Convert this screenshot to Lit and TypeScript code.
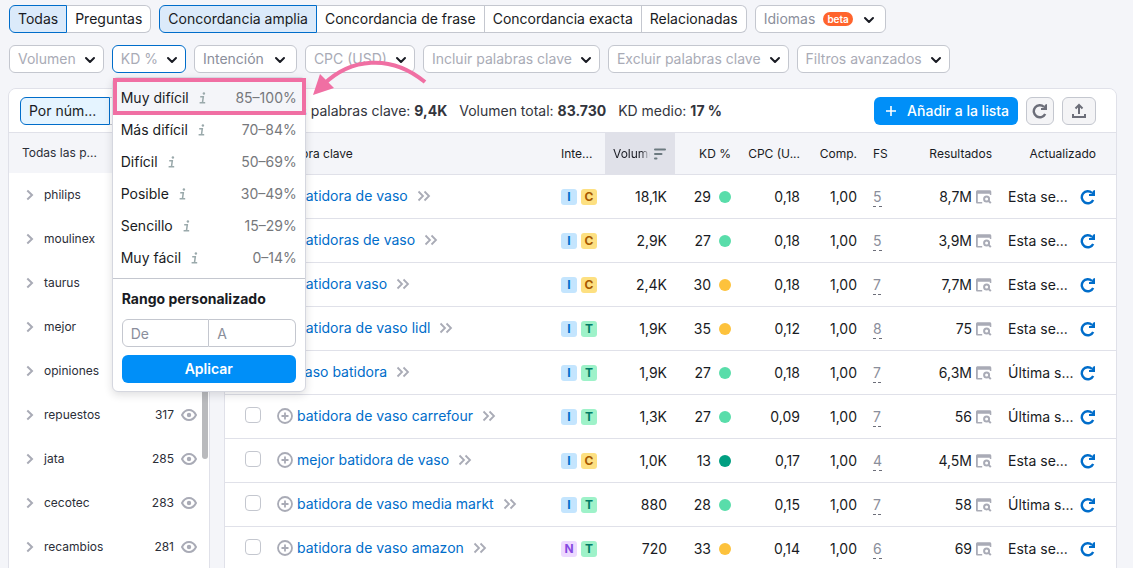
import { LitElement, html, css, svg, nothing } from "lit";
import { customElement, property } from "lit/decorators.js";
import { classMap } from "lit/directives/class-map.js";

const chevron = html`<svg class="chev" width="16" height="16" viewBox="0 0 16 16" fill="none" stroke="#191b23" stroke-width="2" stroke-linecap="round" stroke-linejoin="round" aria-hidden="true"><path d="M4 7l4 4 4-4" /></svg>`;

const info = html`<svg width="8" height="12" viewBox="0 0 8 12" fill="none" stroke="#9aa9ab" stroke-width="1.5" aria-hidden="true"><path d="M1.200 4.700H4.300L3.500 10.700M0.600 10.800H6.200" /><circle cx="4.900" cy="1.500" r="1.200" fill="#9aa9ab" stroke="none" /></svg>`;

const reloadPath = svg`<path d="M13.200 10.900A6 6 0 1 1 12 4" fill="none" stroke="currentColor" stroke-width="2.400" /><path d="M15 1V7H9V5H11.500L13 1.800Z" fill="currentColor" />`;

const reload = html`<svg width="16" height="16" viewBox="0 0 16 16" aria-hidden="true">${reloadPath}</svg>`;

const serp = html`<svg width="16" height="14" viewBox="0 0 16 14" aria-hidden="true"><path d="M0 2C0 .9.7.3 1.800.3H13.600C14.700.3 15.300.9 15.300 2V5H13.800V3.700H1.800V12H6.200V13.500H1.500C.6 13.500 0 12.900 0 11.900Z" fill="#a9abb6" /><circle cx="10.600" cy="8.900" r="2.500" fill="none" stroke="#a9abb6" stroke-width="2" /><path d="M12.500 10.800L14.800 13.100" stroke="#a9abb6" stroke-width="2" /></svg>`;

const eye = html`<svg width="16" height="12" viewBox="0 0 16 12" aria-hidden="true"><path d="M1 6C2.600 2.900 5 1 8 1s5.400 1.900 7 5c-1.600 3.100-4 5-7 5S2.600 9.100 1 6Z" fill="none" stroke="#a9abb6" stroke-width="2" stroke-linejoin="round" /><circle cx="8" cy="6" r="2.200" fill="#a9abb6" /></svg>`;

const caret = html`<svg width="8" height="12" viewBox="0 0 8 12" fill="none" stroke="#a9abb6" stroke-width="2" aria-hidden="true"><path d="M1.300 1.500L6 6 1.300 10.500" /></svg>`;

const plusCircle = html`<svg width="16" height="16" viewBox="0 0 16 16" fill="none" stroke="#a9abb6" stroke-width="1.800" aria-hidden="true"><circle cx="8" cy="8" r="7" /><path d="M8 4.500v7M4.500 8h7" /></svg>`;

const doubleCaret = html`<svg width="14" height="12" viewBox="0 0 14 12" fill="none" stroke="#a9abb6" stroke-width="1.800" aria-hidden="true"><path d="M1.500 1.500L6 6 1.500 10.500M7.500 1.500L12 6 7.500 10.500" /></svg>`;

type Row = [string, string, string, number, string, string, string, number, string, string];

const ROWS: Row[] = [
  ["batidora de vaso", "IC", "18,1K", 29, "green", "0,18", "1,00", 5, "8,7M", "Esta se..."],
  ["batidoras de vaso", "IC", "2,9K", 27, "green", "0,18", "1,00", 5, "3,9M", "Esta se..."],
  ["batidora vaso", "IC", "2,4K", 30, "yellow", "0,18", "1,00", 7, "7,7M", "Esta se..."],
  ["batidora de vaso lidl", "IT", "1,9K", 35, "yellow", "0,12", "1,00", 8, "75", "Esta se..."],
  ["vaso batidora", "IT", "1,9K", 27, "green", "0,18", "1,00", 7, "6,3M", "Última s..."],
  ["batidora de vaso carrefour", "IT", "1,3K", 27, "green", "0,09", "1,00", 7, "56", "Última s..."],
  ["mejor batidora de vaso", "IC", "1,0K", 13, "dark", "0,17", "1,00", 4, "4,5M", "Esta se..."],
  ["batidora de vaso media markt", "IT", "880", 28, "green", "0,15", "1,00", 7, "58", "Última s..."],
  ["batidora de vaso amazon", "NT", "720", 33, "yellow", "0,14", "1,00", 6, "69", "Esta se..."],
];

const GROUPS: [string, string][] = [
  ["philips", ""],
  ["moulinex", ""],
  ["taurus", ""],
  ["mejor", ""],
  ["opiniones", ""],
  ["repuestos", "317"],
  ["jata", "285"],
  ["cecotec", "283"],
  ["recambios", "281"],
];

const LEVELS: [string, string][] = [
  ["Muy difícil", "85–100%"],
  ["Más difícil", "70–84%"],
  ["Difícil", "50–69%"],
  ["Posible", "30–49%"],
  ["Sencillo", "15–29%"],
  ["Muy fácil", "0–14%"],
];

const base = css`
  * {
    box-sizing: border-box;
  }
  button,
  input {
    font: inherit;
    color: inherit;
    margin: 0;
  }
  button {
    cursor: pointer;
    white-space: nowrap;
  }
  svg {
    display: block;
    flex: none;
  }
`;

@customElement("pill-group")
class PillGroup extends LitElement {
  @property({ attribute: false }) items: string[] = [];
  static styles = [
    base,
    css`
      :host {
        display: flex;
      }
      .pill {
        height: 28px;
        padding: 0 8px;
        border: 1px solid #c4c7cf;
        border-left-width: 0;
        background: #fff;
        color: #191b23;
      }
      .pill:first-child {
        border-left-width: 1px;
        border-radius: 6px 0 0 6px;
      }
      .pill:last-child {
        border-radius: 0 6px 6px 0;
      }
      .pill.on {
        background: #dbeafa;
        border-color: #006dca;
      }
    `,
  ];
  render() {
    return this.items.map(
      (t, i) => html`<button class=${classMap({ pill: true, on: i === 0 })} aria-pressed=${i === 0}>${t}</button>`
    );
  }
}

@customElement("filter-button")
class FilterButton extends LitElement {
  @property() label = "";
  @property() badge = "";
  @property({ type: Boolean }) strong = false;
  @property({ type: Boolean }) open = false;
  static styles = [
    base,
    css`
      :host {
        display: block;
      }
      .filter {
        display: flex;
        align-items: center;
        gap: 6px;
        height: 28px;
        padding: 0 5px 0 8px;
        border: 1px solid #c4c7cf;
        border-radius: 6px;
        background: #fff;
        color: #a9abb6;
      }
      .strong {
        gap: 8px;
        padding-right: 8px;
        color: #8a8e9b;
      }
      .open {
        border-color: #006dca;
      }
      .badge {
        padding: 0 4px;
        border-radius: 7px;
        background: #ff642d;
        color: #fff;
        font-size: 10px;
        line-height: 14px;
        font-weight: 600;
      }
    `,
  ];
  render() {
    return html`<button
      class=${classMap({ filter: true, strong: this.strong, open: this.open })}
      aria-expanded=${this.open}
    >
      <span>${this.label}</span>
      ${this.badge ? html`<span class="badge">${this.badge}</span>` : nothing} ${chevron}
    </button>`;
  }
}

@customElement("kd-menu")
class KdMenu extends LitElement {
  static styles = [
    base,
    css`
      :host {
        display: block;
        padding: 4px 0 8px;
        background: #fff;
        border: 1px solid #d5d7df;
        border-radius: 6px;
        box-shadow: 0 3px 8px rgba(25, 27, 35, 0.14);
        color: #191b23;
      }
      .item {
        display: flex;
        align-items: center;
        gap: 10px;
        width: 100%;
        height: 32px;
        padding: 0 8px;
        border: 0;
        background: none;
      }
      .item:first-child {
        background: #f4f5f9;
      }
      .range {
        margin-left: auto;
        color: #76787c;
      }
      .custom {
        margin-top: 4px;
        padding: 10px 9px 0;
        border-top: 1px solid #c4c7cf;
      }
      .title {
        margin: 0;
        font-size: 14px;
        line-height: 20px;
        font-weight: 700;
      }
      .inputs {
        display: flex;
        margin: 10px 0 8px;
      }
      .inputs input {
        flex: 1;
        min-width: 0;
        height: 28px;
        padding: 0 8px;
        border: 1px solid #c4c7cf;
        background: #fff;
        outline: none;
      }
      .inputs input:first-child {
        border-radius: 6px 0 0 6px;
      }
      .inputs input:last-child {
        border-left: 0;
        border-radius: 0 6px 6px 0;
      }
      .inputs input::placeholder {
        color: #8a8e9b;
        opacity: 1;
      }
      .apply {
        width: 100%;
        height: 28px;
        border: 0;
        border-radius: 6px;
        background: #008ff8;
        color: #fff;
        font-weight: 600;
      }
    `,
  ];
  render() {
    return html`
      <div class="list">
        ${LEVELS.map(([n, r]) => html`<button class="item"><span>${n}</span>${info}<span class="range">${r}</span></button>`)}
      </div>
      <div class="custom">
        <h2 class="title">Rango personalizado</h2>
        <div class="inputs">
          <input aria-label="De" placeholder="De" />
          <input aria-label="A" placeholder="A" />
        </div>
        <button class="apply">Aplicar</button>
      </div>
    `;
  }
}

@customElement("group-list")
class GroupList extends LitElement {
  static styles = [
    base,
    css`
      :host {
        display: block;
        position: relative;
        background: #fff;
        border-right: 1px solid #e0e1e9;
        font-size: 12px;
        color: #2b2e38;
      }
      .head {
        height: 40px;
        padding: 0 13px;
        background: #f4f5f9;
        line-height: 40px;
      }
      .rows {
        list-style: none;
        margin: 0;
        padding: 0;
      }
      .row {
        display: flex;
        align-items: center;
        width: 100%;
        height: 44px;
        padding: 0 12px 0 17px;
        border: 0;
        background: none;
      }
      .name {
        margin-left: 10px;
      }
      .count {
        margin-left: auto;
        margin-right: 7px;
      }
      .thumb {
        position: absolute;
        top: 42px;
        right: 1px;
        width: 6px;
        height: 284px;
        border-radius: 3px;
        background: #b9babd;
      }
    `,
  ];
  render() {
    return html`
      <div class="head">Todas las p...</div>
      <ul class="rows">
        ${GROUPS.map(
          ([n, c]) =>
            html`<li><button class="row">${caret}<span class="name">${n}</span><span class="count">${c}</span>${eye}</button></li>`
        )}
      </ul>
      <div class="thumb"></div>
    `;
  }
}

@customElement("keyword-table")
class KeywordTable extends LitElement {
  static styles = [
    base,
    css`
      :host {
        display: block;
        border-left: 1px solid #e0e1e9;
        background: #fff;
        color: #191b23;
      }
      table {
        width: 100%;
        table-layout: fixed;
        border-collapse: separate;
        border-spacing: 0;
      }
      th,
      td {
        padding: 0 8px;
        border-bottom: 1px solid #e0e1e9;
        text-align: right;
        white-space: nowrap;
      }
      th {
        height: 42px;
        background: #f4f5f9;
        font-size: 12px;
        font-weight: 400;
        overflow: hidden;
      }
      td {
        height: 44px;
      }
      .c-check {
        width: 44px;
        padding-left: 20px;
      }
      td.c-check {
        padding-bottom: 4px;
      }
      td.c-kw {
        padding-bottom: 2px;
      }
      .c-int {
        width: 52px;
      }
      .c-vol {
        width: 70px;
      }
      .c-kd {
        width: 64px;
      }
      .c-cpc {
        width: 69px;
      }
      .c-comp {
        width: 57px;
      }
      .c-fs {
        width: 35px;
      }
      .c-res {
        width: 100px;
      }
      .c-upd {
        width: 116px;
        padding-right: 20px;
      }
      .left {
        text-align: left;
      }
      th.sorted {
        background: #e0e1e9;
      }
      .sort,
      .kw,
      .intents,
      .kd,
      .res,
      .upd {
        display: flex;
        align-items: center;
      }
      .sort {
        justify-content: space-between;
      }
      .fade {
        width: 37px;
        overflow: hidden;
        mask-image: linear-gradient(90deg, #000 75%, transparent);
      }
      .check {
        display: block;
        appearance: none;
        width: 16px;
        height: 16px;
        border: 1px solid #c4c7cf;
        border-radius: 4px;
        background: #fff;
      }
      .link {
        margin: 0 9px 0 4px;
        color: #006dca;
        text-decoration: none;
      }
      .intents {
        gap: 4px;
      }
      .tag {
        width: 16px;
        height: 16px;
        border-radius: 3px;
        font-size: 12px;
        line-height: 16px;
        font-weight: 700;
        text-align: center;
      }
      .I {
        background: #c4e5fe;
        color: #006dca;
      }
      .C {
        background: #fde081;
        color: #a75800;
      }
      .T {
        background: #9ef2c9;
        color: #007c65;
      }
      .N {
        background: #edd9ff;
        color: #8649e1;
      }
      .kd {
        justify-content: flex-end;
        gap: 8px;
      }
      .dot {
        width: 12px;
        height: 12px;
        border-radius: 50%;
      }
      .green {
        background: #59ddaa;
      }
      .yellow {
        background: #fdc23c;
      }
      .dark {
        background: #009f81;
      }
      .fs {
        display: inline-block;
        border-bottom: 1px dashed #6c6e79;
        color: #8a8e9b;
        line-height: 18px;
      }
      .res {
        justify-content: flex-end;
        gap: 4px;
      }
      .upd {
        justify-content: space-between;
      }
      .act {
        display: block;
        padding: 0;
        border: 0;
        background: none;
        color: #006dca;
      }
    `,
  ];
  render() {
    return html`<table>
      <thead>
        <tr>
          <th class="c-check"></th>
          <th class="left">Palabra clave</th>
          <th class="c-int left">Inte...</th>
          <th class="c-vol sorted" aria-sort="descending">
            <div class="sort">
              <span class="fade">Volumen</span>
              <svg width="14" height="12" viewBox="0 0 14 12" stroke="#6c7a80" stroke-width="2" stroke-linecap="round" aria-hidden="true"><path d="M2 1.500H12M2 6H8.500M2 10.500H3.500" /></svg>
            </div>
          </th>
          <th class="c-kd">KD %</th>
          <th class="c-cpc">CPC (U...</th>
          <th class="c-comp">Comp.</th>
          <th class="c-fs left">FS</th>
          <th class="c-res">Resultados</th>
          <th class="c-upd">Actualizado</th>
        </tr>
      </thead>
      <tbody>
        ${ROWS.map(
          ([kw, intents, vol, kd, dot, cpc, comp, fs, res, upd]) => html`<tr>
            <td class="c-check"><input class="check" type="checkbox" aria-label=${kw} /></td>
            <td class="c-kw"><div class="kw">${plusCircle}<a class="link" href="#">${kw}</a>${doubleCaret}</div></td>
            <td><div class="intents">${[...intents].map((i) => html`<span class="tag ${i}">${i}</span>`)}</div></td>
            <td>${vol}</td>
            <td><div class="kd">${kd}<span class="dot ${dot}"></span></div></td>
            <td>${cpc}</td>
            <td>${comp}</td>
            <td class="left"><span class="fs">${fs}</span></td>
            <td><div class="res">${res}${serp}</div></td>
            <td class="c-upd">
              <div class="upd"><span>${upd}</span><button class="act" aria-label="Actualizar">${reload}</button></div>
            </td>
          </tr>`
        )}
      </tbody>
    </table>`;
  }
}

@customElement("app-root")
class AppRoot extends LitElement {
  static styles = [
    base,
    css`
      :host {
        display: block;
        height: 100vh;
        overflow: hidden;
        padding: 5px 16px 0 8px;
        background: #f4f5f9;
        color: #191b23;
        font-family: Inter, "Liberation Sans", sans-serif;
        font-size: 14px;
        line-height: 20px;
      }
      .bar {
        display: flex;
        gap: 8px;
        margin: 0 0 12px 1px;
      }
      .kd-wrap {
        position: relative;
      }
      .menu {
        position: absolute;
        z-index: 2;
        top: calc(100% + 4px);
        left: 0;
        width: 194px;
      }
      .mark {
        position: absolute;
        z-index: 3;
        top: calc(100% + 5px);
        left: 1px;
        width: 193px;
        height: 37px;
        border: 4px solid #f06fa3;
        pointer-events: none;
      }
      .arrow {
        position: absolute;
        z-index: 3;
        top: 8px;
        left: 198px;
        pointer-events: none;
      }
      .card {
        margin-top: 15px;
        border: 1px solid #e0e1e9;
        border-radius: 8px 8px 0 0;
        background: #f4f5f9;
        overflow: hidden;
      }
      .tools {
        display: flex;
        align-items: center;
        height: 44px;
        padding: 0 20px 0 11px;
        border-bottom: 1px solid #e0e1e9;
        background: #fff;
      }
      .tab {
        width: 90px;
        height: 28px;
        padding: 0 8px;
        border: 1px solid #c4c7cf;
        border-left-width: 0;
        border-radius: 0 6px 6px 0;
        background: #fff;
        text-align: left;
      }
      .tab.on {
        border: 1px solid #006dca;
        border-radius: 6px 0 0 6px;
        background: #e5f4ff;
      }
      .stats {
        display: flex;
        gap: 12px;
        margin-left: 44px;
        color: #33353d;
      }
      .stats b {
        font-weight: 700;
      }
      .actions {
        display: flex;
        gap: 8px;
        margin-left: auto;
      }
      .add {
        display: flex;
        align-items: center;
        gap: 11px;
        height: 28px;
        padding: 0 9px 0 12px;
        border: 0;
        border-radius: 6px;
        background: #008ff8;
        color: #fff;
        font-weight: 500;
      }
      .icon {
        display: flex;
        align-items: center;
        justify-content: center;
        width: 28px;
        height: 28px;
        padding: 0;
        border: 1px solid #c4c7cf;
        border-radius: 6px;
        background: #f4f4f6;
        color: #6c6e79;
      }
      .wide {
        width: 34px;
      }
      .body {
        display: grid;
        grid-template-columns: 201px minmax(0, 1fr);
        column-gap: 14px;
      }
    `,
  ];
  render() {
    return html`
      <div class="bar">
        <pill-group .items=${["Todas", "Preguntas"]}></pill-group>
        <pill-group
          .items=${["Concordancia amplia", "Concordancia de frase", "Concordancia exacta", "Relacionadas"]}
        ></pill-group>
        <filter-button label="Idiomas" badge="beta" strong></filter-button>
      </div>
      <div class="bar">
        <filter-button label="Volumen"></filter-button>
        <div class="kd-wrap">
          <filter-button label="KD %" open></filter-button>
          <kd-menu class="menu"></kd-menu>
          <div class="mark"></div>
          <svg class="arrow" width="120" height="46" viewBox="0 0 120 46" aria-hidden="true">
            <path d="M14 31C40 6 80 0 115 29" fill="none" stroke="#f06fa3" stroke-width="4" />
            <path d="M3 42L10 21L24 35Z" fill="#f06fa3" />
          </svg>
        </div>
        <filter-button label="Intención" strong></filter-button>
        <filter-button label="CPC (USD)"></filter-button>
        <filter-button label="Incluir palabras clave"></filter-button>
        <filter-button label="Excluir palabras clave"></filter-button>
        <filter-button label="Filtros avanzados"></filter-button>
      </div>
      <main class="card">
        <div class="tools">
          <button class="tab on">Por núm...</button>
          <button class="tab" aria-label="Por volumen"></button>
          <div class="stats">
            <span>Todas las palabras clave: <b>9,4K</b></span>
            <span>Volumen total: <b>83.730</b></span>
            <span>KD medio: <b>17 %</b></span>
          </div>
          <div class="actions">
            <button class="add">
              <svg width="10" height="10" viewBox="0 0 10 10" stroke="#fff" stroke-width="1.600" aria-hidden="true"><path d="M5 0v10M0 5h10" /></svg>
              Añadir a la lista
            </button>
            <button class="icon" aria-label="Actualizar">${reload}</button>
            <button class="icon wide" aria-label="Exportar">
              <svg width="16" height="16" viewBox="0 0 16 16" fill="none" stroke="currentColor" stroke-width="2" aria-hidden="true"><path d="M8 11V3M4.500 5.500L8 2l3.500 3.500M2 11v3h12v-3" /></svg>
            </button>
          </div>
        </div>
        <div class="body">
          <group-list></group-list>
          <keyword-table></keyword-table>
        </div>
      </main>
    `;
  }
}
